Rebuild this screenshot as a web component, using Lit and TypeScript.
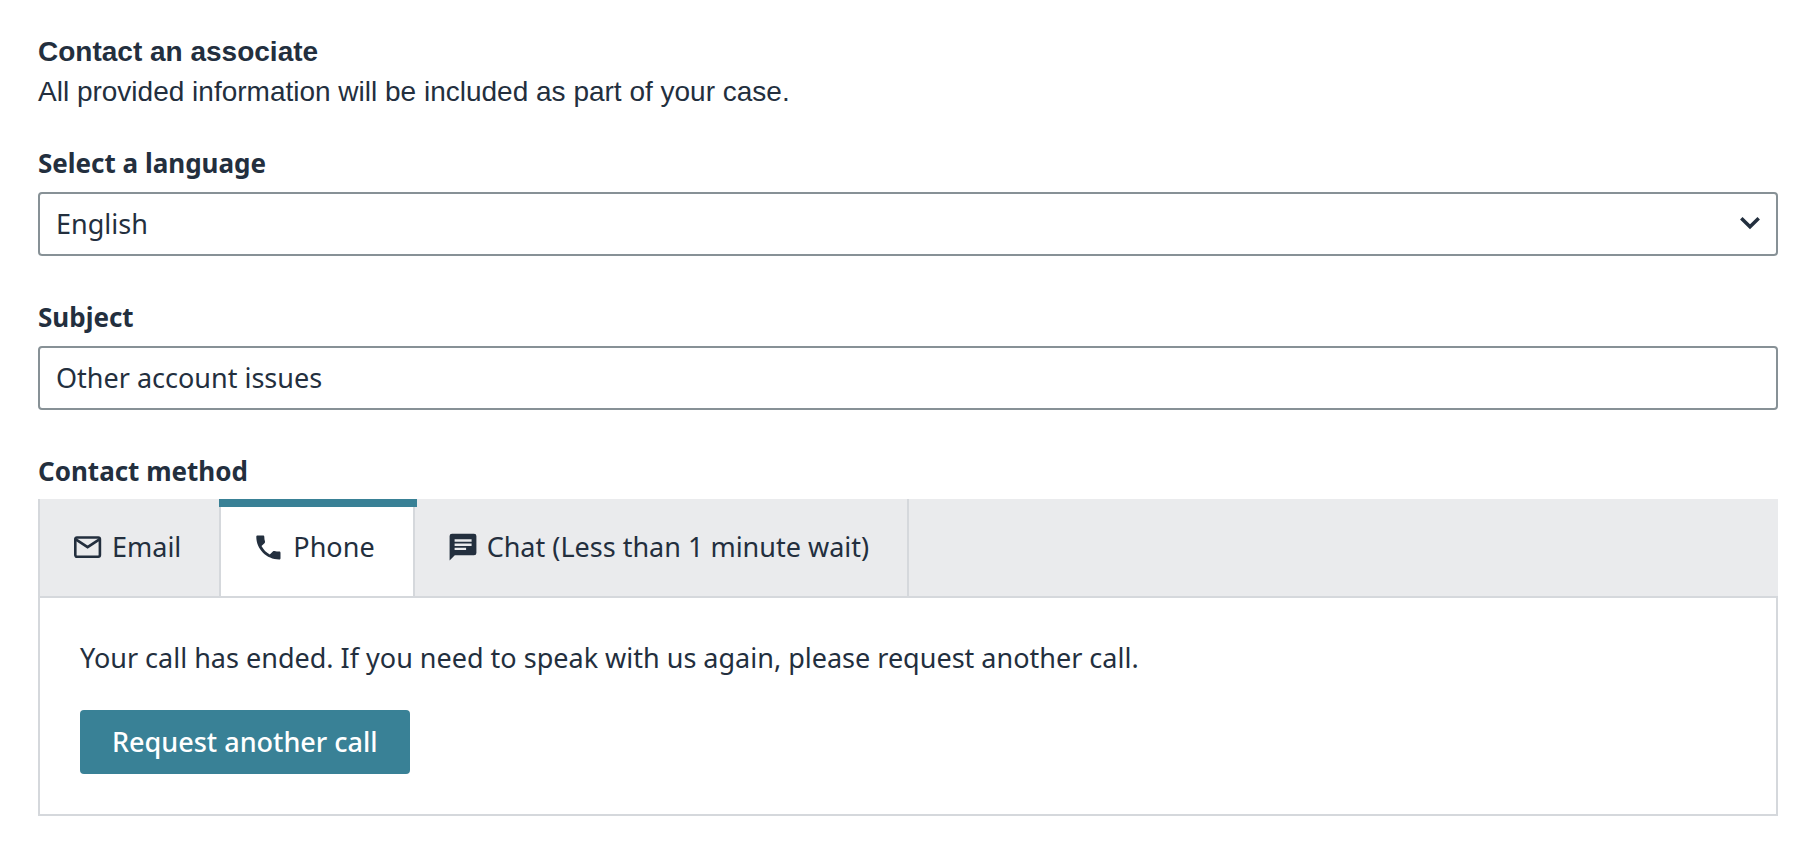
import { LitElement, html, css, svg } from "lit";
import { customElement, state } from "lit/decorators.js";
import { classMap } from "lit/directives/class-map.js";

type Method = { id: string; label: string; icon: unknown };

const mailIcon = svg`<svg class="icon" viewBox="0 0 28 28" aria-hidden="true">
  <rect x="1.3" y="4.500" width="24.600" height="19.200" rx="1.600" fill="none" stroke="currentColor" stroke-width="2.600"/>
  <path d="M1.800 6.300 13.600 14.200 25.400 6.300" fill="none" stroke="currentColor" stroke-width="2.600"/>
</svg>`;

const phoneIcon = svg`<svg class="icon" viewBox="0 0 28 28" aria-hidden="true">
  <path d="M2.600 2.500h5.400c.8 0 1.300.5 1.300 1.300 0 1.700.2 3.200.7 4.700.1.500 0 1-.3 1.400L6.500 13.100c2 3.700 4.700 6.500 8.300 8.400l3.300-3.200c.4-.4.900-.5 1.400-.3 1.500.4 3 .6 4.700.6.800 0 1.300.5 1.300 1.300v5.300c0 .8-.5 1.300-1.300 1.300C11.500 26.500 1.300 16 1.300 3.800c0-.8.500-1.300 1.300-1.300z" fill="currentColor"/>
</svg>`;

const chatIcon = svg`<svg class="icon" viewBox="0 0 28 28" aria-hidden="true">
  <path fill-rule="evenodd" d="M3 .7h22A2.400 2.400 0 0 1 27.400 3.100v16.800a2.400 2.400 0 0 1-2.400 2.400H5.800L.6 27.600V3.100A2.400 2.400 0 0 1 3 .7zM5.600 6.300v2.500h17V6.300zm0 4.200v2.500h17v-2.500zm0 4.200v2.400h11.500v-2.400z" fill="currentColor"/>
</svg>`;

@customElement("app-root")
export class AppRoot extends LitElement {
  static styles = css`
    :host {
      display: block;
      box-sizing: border-box;
      padding: 32px 20px 32px 38px;
      background: #fff;
      color: #232f3e;
      font-family: "Noto Sans", sans-serif;
      font-size: 27px;
    }
    *,
    *::before {
      box-sizing: border-box;
    }
    .intro {
      margin-bottom: 30px;
      font-family: "Liberation Sans", Arial, sans-serif;
      font-size: 28px;
      line-height: 40px;
    }
    .title,
    .text {
      margin: 0;
      font-size: inherit;
    }
    .form {
      display: flex;
      flex-direction: column;
      gap: 40px;
    }
    .field {
      display: flex;
      flex-direction: column;
      gap: 8px;
    }
    .method {
      gap: 7px;
    }
    .label {
      margin: 0;
      font-size: 26px;
      font-weight: 700;
      line-height: 42px;
    }
    .control {
      display: block;
      width: 100%;
      height: 64px;
      margin: 0;
      padding: 0 16px 2px;
      border: 2px solid #879196;
      border-radius: 4px;
      background: #fff;
      color: inherit;
      font: inherit;
      appearance: none;
      outline: none;
    }
    .select {
      position: relative;
    }
    .chevron {
      position: absolute;
      right: 18px;
      top: 24px;
      width: 20px;
      height: 14px;
      pointer-events: none;
    }
    .tabs {
      display: flex;
      height: 99px;
      border-bottom: 2px solid #d5d8dc;
      border-left: 2px solid #d5d8dc;
      background: #eaebed;
    }
    .tab {
      position: relative;
      display: flex;
      align-items: center;
      gap: 10px;
      padding: 0 38px 2px 34px;
      border: 0;
      border-right: 2px solid #d5d8dc;
      background: none;
      color: inherit;
      font: inherit;
    }
    .active {
      background: #fff;
    }
    .active::before {
      content: "";
      position: absolute;
      top: 0;
      left: -2px;
      right: -4px;
      height: 8px;
      background: #398196;
    }
    .icon {
      width: 28px;
      height: 28px;
      flex: none;
    }
    .panel {
      padding: 40px;
      border: 2px solid #d5d8dc;
      border-top: 0;
    }
    .text {
      line-height: 40px;
    }
    .request {
      height: 64px;
      margin-top: 32px;
      padding: 0 32px 2px;
      border: 0;
      border-radius: 4px;
      background: #398196;
      color: #fff;
      font: inherit;
      font-weight: 500;
    }
  `;

  @state() private selected = "phone";

  private methods: Method[] = [
    { id: "email", label: "Email", icon: mailIcon },
    { id: "phone", label: "Phone", icon: phoneIcon },
    { id: "chat", label: "Chat (Less than 1 minute wait)", icon: chatIcon },
  ];

  render() {
    return html`
      <header class="intro">
        <h1 class="title">Contact an associate</h1>
        <p class="text">All provided information will be included as part of your case.</p>
      </header>
      <main class="form">
        <div class="field">
          <label class="label" for="language">Select a language</label>
          <div class="select">
            <select class="control" id="language">
              <option>English</option>
            </select>
            <svg class="chevron" viewBox="0 0 20 14" aria-hidden="true">
              <path d="M1.300 2.200 10 10.800 18.700 2.200" fill="none" stroke="currentColor" stroke-width="3.500"/>
            </svg>
          </div>
        </div>
        <div class="field">
          <label class="label" for="subject">Subject</label>
          <input class="control" id="subject" type="text" value="Other account issues" />
        </div>
        <section class="field method">
          <h2 class="label" id="method">Contact method</h2>
          <div>
            <div class="tabs" role="tablist" aria-labelledby="method">
              ${this.methods.map(
                (m) => html`<button
                  class=${classMap({ tab: true, active: m.id === this.selected })}
                  role="tab"
                  aria-selected=${m.id === this.selected}
                  @click=${() => (this.selected = m.id)}
                >${m.icon}<span>${m.label}</span></button>`
              )}
            </div>
            <div class="panel" role="tabpanel">
              <p class="text">Your call has ended. If you need to speak with us again, please request another call.</p>
              <button class="request">Request another call</button>
            </div>
          </div>
        </section>
      </main>
    `;
  }
}
